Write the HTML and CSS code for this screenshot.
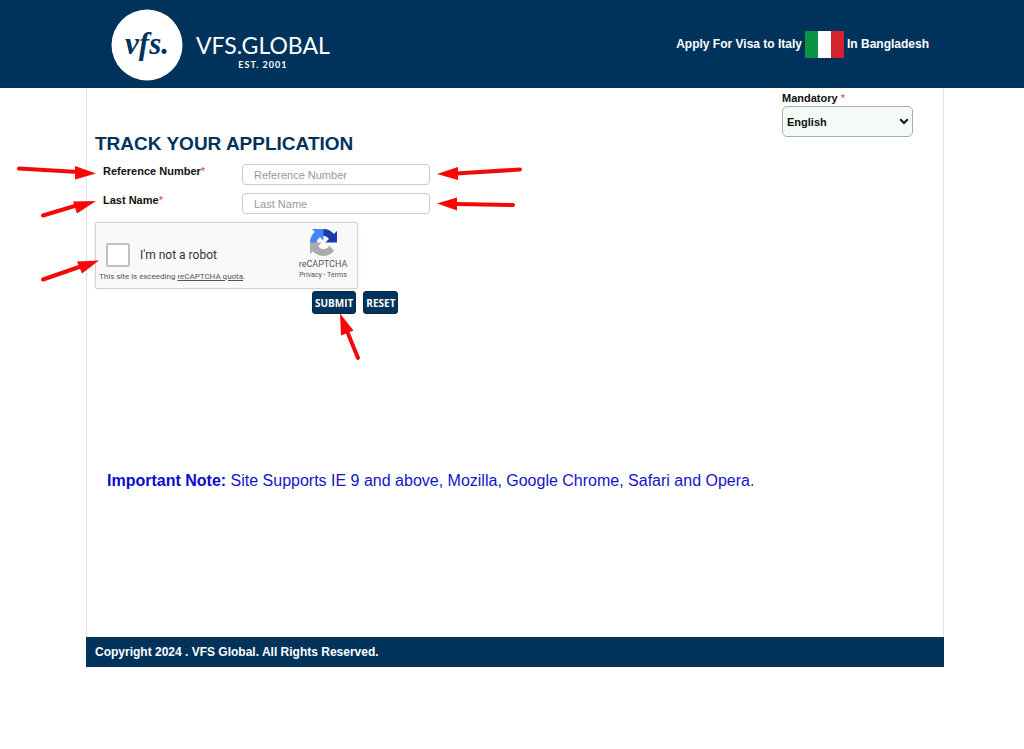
FILE: index.html
```html
<!DOCTYPE html>
<html lang="en">
<head>
<meta charset="utf-8">
<meta name="viewport" content="width=device-width, initial-scale=1">
<title>Track Your Application</title>
<link rel="stylesheet" href="styles.css">
</head>
<body>
<header class="header">
  <div class="brand">
    <svg class="brand-mark" viewBox="0 0 72 72" role="img" aria-label="vfs">
      <circle cx="36" cy="36" r="35.5" fill="#fff"/>
      <text class="brand-script" x="36" y="45" text-anchor="middle">vfs.</text>
    </svg>
    <div class="brand-text">
      <span class="brand-name">VFS.GLOBAL</span>
      <span class="brand-est">EST. 2001</span>
    </div>
  </div>
  <p class="route">
    <span>Apply For Visa to Italy</span>
    <svg class="flag" viewBox="0 0 39 27" role="img" aria-label="Italian flag">
      <path fill="#0b9444" d="M0 0h13v27H0z"/>
      <path fill="#fff" d="M13 0h13v27H13z"/>
      <path fill="#d2232f" d="M26 0h13v27H26z"/>
    </svg>
    <span>In Bangladesh</span>
  </p>
</header>

<div class="page">
  <main class="main">
    <div class="language">
      <label class="label" for="language">Mandatory <span class="star">*</span></label>
      <span class="select-wrap">
        <select id="language" class="select"><option>English</option></select>
        <svg class="chevron" viewBox="0 0 10 7" aria-hidden="true"><path d="M1.2 1.2 5 5l3.8-3.8" fill="none" stroke="#111" stroke-width="2"/></svg>
      </span>
    </div>

    <h1 class="title">TRACK YOUR APPLICATION</h1>
    <form class="form">
      <div class="field">
        <label class="label" for="reference">Reference Number<span class="star">*</span></label>
        <input class="input" id="reference" type="text" placeholder="Reference Number">
      </div>
      <div class="field">
        <label class="label" for="lastname">Last Name<span class="star">*</span></label>
        <input class="input" id="lastname" type="text" placeholder="Last Name">
      </div>
      <div class="captcha">
        <div class="captcha-left">
          <div class="captcha-check">
            <input class="checkbox" id="robot" type="checkbox">
            <label for="robot">I'm not a robot</label>
          </div>
          <p class="quota">This site is exceeding <a href="#">reCAPTCHA quota</a>.</p>
        </div>
        <div class="captcha-right">
          <svg class="captcha-logo" viewBox="0 0 64 64" aria-hidden="true">
            <path fill="#1c3aa9" d="M64 31.955c0-.46-.01-.918-.03-1.373V4.610l-7.180 7.181C50.910 4.600 41.990 0 31.998 0 21.600 0 12.363 4.970 6.524 12.667l11.768 11.892a15.590 15.590 0 0 1 4.765-5.350c2.056-1.604 4.970-2.916 8.940-2.916.480 0 .850.056 1.122.162 4.920.388 9.184 3.103 11.694 7.043l-8.330 8.330z"/>
            <path fill="#4285f4" d="M31.862 0H4.517l7.180 7.210C4.505 13.090 0 22.008 0 32c0 10.398 4.970 19.635 12.575 25.474l11.892-11.768a15.590 15.590 0 0 1-5.350-4.765c-1.604-2.056-2.916-4.970-2.916-8.940 0-.480.056-.850.162-1.122.388-4.920 3.103-9.184 7.043-11.694l8.330 8.330z"/>
            <path fill="#ababab" d="M0 32.136v27.347l7.186-7.180C13.095 59.495 22.013 64 32.006 64c10.398 0 19.635-4.970 25.474-12.575L45.712 39.533a15.590 15.590 0 0 1-4.765 5.350c-2.056 1.604-4.970 2.916-8.940 2.916-.480 0-.850-.056-1.122-.162-4.920-.388-9.184-3.103-11.694-7.043l8.330-8.330z"/>
          </svg>
          <span class="captcha-name">reCAPTCHA</span>
          <span class="captcha-links"><a href="#">Privacy</a> - <a href="#">Terms</a></span>
        </div>
      </div>
      <div class="actions">
        <button class="button" type="submit">SUBMIT</button>
        <button class="button" type="reset">RESET</button>
      </div>
    </form>
    <p class="note"><strong>Important Note:</strong> Site Supports IE 9 and above, Mozilla, Google Chrome, Safari and Opera.</p>
  </main>
  <footer class="footer">Copyright 2024 . VFS Global. All Rights Reserved.</footer>
</div>

<svg class="arrows" width="540" height="380" viewBox="0 0 540 380" aria-hidden="true">
  <g stroke="#f20a0a" stroke-width="4" stroke-linecap="round">
    <path d="M19 168.500 78 172"/>
    <path d="M43 215.500 78 205"/>
    <path d="M43 279.500 82 266"/>
    <path d="M520 169.500 456 173.500"/>
    <path d="M513 205 456 204"/>
    <path d="M358 358 347 331"/>
  </g>
  <g fill="#fd0505">
    <path d="M96 173.500 75 166v13.500z"/>
    <path d="M96 201 73 201.500l4 12z"/>
    <path d="M99 260.500 77 261.500l5 12z"/>
    <path d="M437 174 458 167v13z"/>
    <path d="M437 203.500 457 197.500v13z"/>
    <path d="M340 313.500 341 335.500l12.500-5z"/>
  </g>
</svg>
</body>
</html>
```
FILE: styles.css
```css
* { box-sizing: border-box; }

body {
  position: relative;
  margin: 0;
  background: #fff;
  color: #111;
  font-family: "Liberation Sans", Arial, sans-serif;
  font-size: 11px;
}

p, h1 { margin: 0; }

.header {
  display: flex;
  align-items: center;
  justify-content: space-between;
  min-height: 88px;
  padding: 2px 95px 0 111px;
  background: #00335b;
  color: #fff;
}

.brand { display: flex; align-items: center; gap: 13px; }
.brand-mark { width: 72px; height: 72px; }
.brand-script {
  fill: #00335b;
  font: italic bold 31px "Liberation Serif", serif;
}
.brand-text {
  display: flex;
  flex-direction: column;
  align-items: center;
  padding-top: 16px;
  font-family: Lato, sans-serif;
}
.brand-name { font-size: 23px; line-height: 24px; }
.brand-est { font-size: 9px; line-height: 16px; font-weight: 700; letter-spacing: 1px; }

.route {
  display: flex;
  align-items: center;
  gap: 3px;
  padding-bottom: 2px;
  font-size: 12px;
  font-weight: 700;
}
.flag { width: 39px; height: 27px; }

.page { margin: 0 80px 0 86px; }

.main {
  position: relative;
  min-height: 549px;
  padding: 44px 8px 0;
  border: solid #e2e2e2;
  border-width: 0 1px;
}

.label { font-size: 11px; line-height: 14px; font-weight: 700; }
.star { color: #f0303a; font-weight: 400; }

.language {
  position: absolute;
  top: 3px;
  right: 30px;
  width: 131px;
}
.language .label { display: block; margin-bottom: 1px; }
.select-wrap { position: relative; display: block; }
.select {
  appearance: none;
  display: block;
  width: 100%;
  height: 31px;
  padding: 0 4px;
  border: 1px solid #a9aeab;
  border-radius: 5px;
  background: #f4fbf6;
  color: #111;
  font: bold 11px "Liberation Sans", Arial, sans-serif;
}
.chevron {
  position: absolute;
  top: 12px;
  right: 4px;
  width: 10px;
  height: 7px;
  pointer-events: none;
}

.title {
  color: #00335b;
  font-size: 19px;
  line-height: 24px;
  font-weight: 700;
}

.form { padding-top: 8px; }
.field {
  display: grid;
  grid-template-columns: 139px 188px;
  align-items: start;
  margin-bottom: 8px;
  padding-left: 8px;
}
.input {
  width: 100%;
  height: 21px;
  padding: 0 11px;
  border: 1px solid #ccc;
  border-radius: 4px;
  font: 11px "Liberation Sans", Arial, sans-serif;
}
.input::placeholder { color: #999; opacity: 1; }

.captcha {
  display: flex;
  justify-content: space-between;
  width: 263px;
  height: 67px;
  border: 1px solid #d3d3d3;
  border-radius: 2px;
  background: #f9f9f9;
  box-shadow: 0 0 3px rgba(0, 0, 0, .1);
  color: #333;
  font-family: Roboto, sans-serif;
}
.captcha a { color: inherit; }
.captcha-left { padding: 20px 0 0 3px; }
.captcha-check {
  display: flex;
  align-items: center;
  gap: 10px;
  padding-left: 7px;
  font-size: 12px;
}
.checkbox {
  appearance: none;
  width: 24px;
  height: 24px;
  margin: 0;
  border: 2px solid #c1c1c1;
  border-radius: 2px;
  background: #fff;
}
.quota { padding-top: 5px; color: #555; font-size: 8px; line-height: 10px; }
.captcha-right {
  display: flex;
  flex-direction: column;
  align-items: center;
  width: 68px;
  padding-top: 6px;
  color: #555;
}
.captcha-logo { width: 27px; height: 27px; }
.captcha-name { padding-top: 3px; font-size: 9px; line-height: 11px; }
.captcha-links { font-size: 7px; line-height: 10px; }
.captcha-links a { text-decoration: none; }

.actions { display: flex; gap: 7px; padding: 2px 0 0 217px; }
.button {
  height: 23px;
  padding: 0 2px;
  border: 1px solid #00294a;
  border-radius: 3px;
  background: #00335b;
  color: #fff;
  font: 700 10px "Open Sans", sans-serif;
}

.note {
  padding: 157px 12px 0;
  color: #1414c8;
  font-size: 16px;
  line-height: 20px;
}
.note strong { color: #0a0ad2; }

.footer {
  padding: 8px 9px;
  background: #00335b;
  color: #fff;
  font-size: 12px;
  line-height: 14px;
  font-weight: 700;
}

/* Annotation arrows drawn over the page */
.arrows {
  position: absolute;
  top: 0;
  left: 0;
  pointer-events: none;
}
```
